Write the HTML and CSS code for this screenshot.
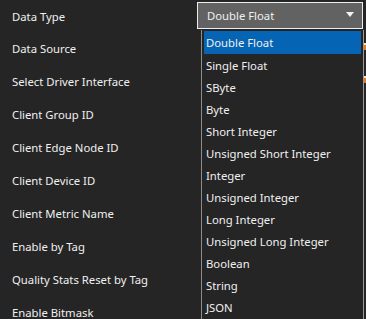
FILE: index.html
```html
<!doctype html>
<html>
<head>
  <title>Tag Properties</title>
  <link rel="stylesheet" href="styles.css">
</head>
<body class="dark-theme">
  <div class="property-grid">
    <div class="property-row">
      <div class="property-label">Data Type</div>
      <div class="property-field">
        <div class="combo-box">
          <span class="combo-value">Double Float</span>
          <svg class="combo-arrow" width="8" height="5" viewBox="0 0 8 5"><path d="M0 0h8L4 5z" fill="#F2F2F2"></path></svg>
        </div>
      </div>
    </div>
    <div class="property-row">
      <div class="property-label">Data Source</div>
      <div class="property-field"><span class="warn-icon"></span></div>
    </div>
    <div class="property-row">
      <div class="property-label">Select Driver Interface</div>
      <div class="property-field"><span class="warn-icon"></span></div>
    </div>
    <div class="property-row">
      <div class="property-label">Client Group ID</div>
      <div class="property-field"></div>
    </div>
    <div class="property-row">
      <div class="property-label">Client Edge Node ID</div>
      <div class="property-field"></div>
    </div>
    <div class="property-row">
      <div class="property-label">Client Device ID</div>
      <div class="property-field"></div>
    </div>
    <div class="property-row">
      <div class="property-label">Client Metric Name</div>
      <div class="property-field"></div>
    </div>
    <div class="property-row">
      <div class="property-label">Enable by Tag</div>
      <div class="property-field"></div>
    </div>
    <div class="property-row">
      <div class="property-label">Quality Stats Reset by Tag</div>
      <div class="property-field"></div>
    </div>
    <div class="property-row">
      <div class="property-label">Enable Bitmask</div>
      <div class="property-field"></div>
    </div>
  </div>

  <ul class="combo-list">
    <li class="combo-item selected">Double Float</li>
    <li class="combo-item">Single Float</li>
    <li class="combo-item">SByte</li>
    <li class="combo-item">Byte</li>
    <li class="combo-item">Short Integer</li>
    <li class="combo-item">Unsigned Short Integer</li>
    <li class="combo-item">Integer</li>
    <li class="combo-item">Unsigned Integer</li>
    <li class="combo-item">Long Integer</li>
    <li class="combo-item">Unsigned Long Integer</li>
    <li class="combo-item">Boolean</li>
    <li class="combo-item">String</li>
    <li class="combo-item">JSON</li>
  </ul>
</body>
</html>
```

FILE: styles.css
```css
body.dark-theme {
  background: #252525;
  color: #F0F0F0;
}
body {
  font: 400 11.3px/1.2 'Noto Sans','Open Sans',sans-serif;
  -webkit-font-smoothing: antialiased;
  overflow: hidden;
}
body, html, ul {
  margin: 0;
  padding: 0;
}
body * {
  box-sizing: border-box;
}
.property-grid {
  display: flex;
  flex-direction: column;
}
.property-row {
  display: flex;
  align-items: center;
  height: 33px;
}
.property-row:first-child {
  height: 32px;
}
.property-label {
  width: 197px;
  padding-left: 12px;
  padding-top: 1px;
  white-space: nowrap;
}
.property-field {
  display: flex;
  align-items: center;
  justify-content: flex-end;
  width: 166px;
  height: 100%;
  flex: 0 0 166px;
}
.combo-box {
  display: flex;
  align-items: center;
  justify-content: space-between;
  width: 166px;
  height: 27px;
  margin-top: -2px;
  padding: 0 8px 0 9px;
  background: #626262;
  border: 1px solid #EDEDED;
}
.combo-value {
  padding-top: 1px;
}
.combo-arrow {
  display: block;
  margin-top: -2px;
}
.warn-icon {
  flex: 0 0 4px;
  width: 4px;
  height: 7px;
  margin-right: -4px;
  margin-top: -4px;
  background: linear-gradient(#F7E7B0 0, #F7E7B0 2px, #E07A1E 2px);
  border-radius: 1px;
}
.combo-list {
  list-style: none;
  position: absolute;
  top: 30px;
  left: 201px;
  width: 163px;
  padding: 1px 2px;
  background: #252525;
  border-left: 1px solid #8C8C8C;
  border-right: 1px solid #9A9A9A;
  z-index: 2;
}
.combo-item {
  height: 22px;
  line-height: 23px;
  padding-left: 2px;
  white-space: nowrap;
}
.combo-item.selected {
  background: #0564B4;
  height: 23px;
  line-height: 24px;
}
```
